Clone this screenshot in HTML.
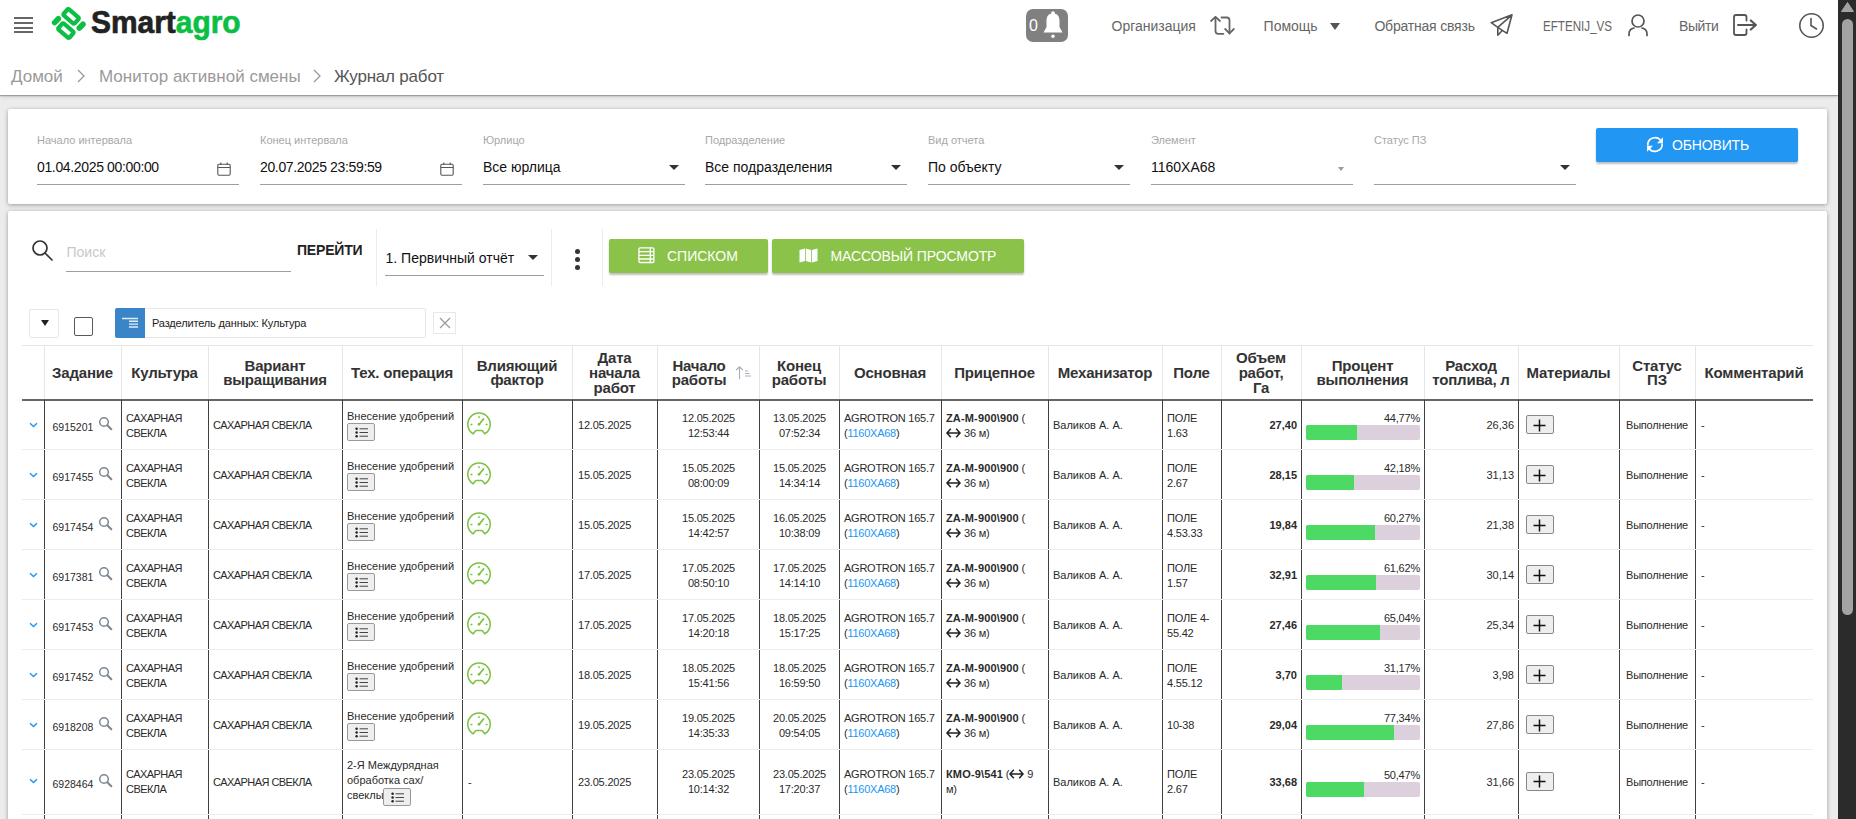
<!DOCTYPE html>
<html><head><meta charset="utf-8">
<style>
html,body{margin:0;padding:0;}
body{width:1856px;height:819px;overflow:hidden;position:relative;background:#ececec;font-family:"Liberation Sans",sans-serif;}
.t{position:absolute;white-space:nowrap;line-height:1;}
.abs{position:absolute;}
svg{position:absolute;overflow:visible;}
</style></head><body>
<div style="position:absolute;left:0px;top:0px;width:1838px;height:95px;background:#fff;box-shadow:0 1px 1px rgba(0,0,0,.25),0 1px 4px rgba(0,0,0,.2);z-index:2"></div>
<div class="abs" style="left:0;top:0;width:1838px;height:95px;z-index:3">
<div style="position:absolute;left:14px;top:17px;width:19px;height:2px;background:#666"></div>
<div style="position:absolute;left:14px;top:22px;width:19px;height:2px;background:#666"></div>
<div style="position:absolute;left:14px;top:27px;width:19px;height:2px;background:#666"></div>
<div style="position:absolute;left:14px;top:31px;width:19px;height:2px;background:#666"></div>
<svg style="left:48px;top:4px" width="42" height="40" viewBox="0 0 42 40">
<g fill="none" stroke="#0abf44" stroke-width="4.2">
<rect x="-7.3" y="-4" width="14.6" height="8" rx="1.5" transform="translate(23.1 12.4) rotate(41)"/>
<rect x="-7.3" y="-4" width="14.6" height="8" rx="1.5" transform="translate(17.9 26.6) rotate(41)"/>
</g>
<g stroke="#0abf44" stroke-width="5.6" stroke-linecap="round">
<line x1="6.6" y1="18.6" x2="10.3" y2="14.8"/>
<line x1="31.3" y1="24.0" x2="35.0" y2="20.2"/>
</g>
</svg>
<div class="t" style="left:91px;top:5.91px;font-size:32px;color:#333;font-weight:700;letter-spacing:0px;transform:scaleX(0.935);transform-origin:left;"><span style="color:#222;-webkit-text-stroke:0.7px #222">Smart</span><span style="color:#0abf44;-webkit-text-stroke:0.7px #0abf44">agro</span></div>
<div style="position:absolute;left:1026px;top:9px;width:42px;height:33px;background:#808080;border-radius:7px"></div>
<div class="t" style="left:1029px;top:17.66px;font-size:16px;color:#fff;font-family:"Liberation Serif",serif;">0</div>
<svg style="left:1042px;top:11px" width="22" height="28" viewBox="0 0 22 28">
<circle cx="11" cy="2.2" r="1.9" fill="#fff"/>
<path d="M11 2.5 C6 2.5 4.5 6 4.5 10 L4.5 16 L1.5 21.5 L20.5 21.5 L17.5 16 L17.5 10 C17.5 6 16 2.5 11 2.5 Z" fill="#fff"/>
<circle cx="11" cy="25.3" r="1.7" fill="#fff"/>
</svg>
<div class="t" style="left:1111.5px;top:19.15px;font-size:14px;color:#666;">Организация</div>
<svg style="left:1210px;top:16px" width="26" height="19" viewBox="0 0 26 19">
<g fill="none" stroke="#666" stroke-width="1.8" stroke-linecap="round" stroke-linejoin="round">
<path d="M1 5 L5.5 0.8 L10 5"/><path d="M5.5 1.2 V15 Q5.5 17.8 8.3 17.8 H13.4"/>
<path d="M11.5 1.5 H16.8 Q19.5 1.5 19.5 4.2 V17.5"/><path d="M15.2 13 L19.5 17.3 L23.8 13"/>
</g></svg>
<div class="t" style="left:1263.6px;top:19.15px;font-size:14px;color:#666;">Помощь</div>
<svg style="left:1330px;top:22.5px" width="10" height="7" viewBox="0 0 10 7"><path d="M0 0 H10 L5 7 Z" fill="#555"/></svg>
<div class="t" style="left:1374.4px;top:19.15px;font-size:14px;color:#666;letter-spacing:-0.2px;">Обратная связь</div>
<svg style="left:1490px;top:14px" width="23" height="23" viewBox="0 0 23 23">
<g fill="none" stroke="#555" stroke-width="1.6" stroke-linejoin="round">
<path d="M22 0.8 L1.2 8.7 L7.8 13.3 L22 0.8 L17 19.3 L7.8 13.3 V21.2 L12 16.8"/>
</g></svg>
<div class="t" style="left:1542.5px;top:19.15px;font-size:14px;color:#666;transform:scaleX(0.83);transform-origin:left;">EFTENIJ_VS</div>
<svg style="left:1628px;top:14px" width="20" height="22" viewBox="0 0 20 22">
<g fill="none" stroke="#555" stroke-width="1.7" stroke-linecap="round">
<circle cx="10" cy="7" r="6"/><path d="M1 21.5 V20 Q1 15 6 14 M19 21.5 V20 Q19 15 14 14"/>
</g></svg>
<div class="t" style="left:1679px;top:19.15px;font-size:14px;color:#666;letter-spacing:-0.4px;">Выйти</div>
<svg style="left:1733px;top:14px" width="25" height="22" viewBox="0 0 25 22">
<g fill="none" stroke="#555" stroke-width="1.8" stroke-linecap="round" stroke-linejoin="round">
<path d="M13.5 6.5 V3 Q13.5 1 11.5 1 H3 Q1 1 1 3 V19 Q1 21 3 21 H11.5 Q13.5 21 13.5 19 V15.5"/><path d="M5 11 H22.5" stroke-width="2"/><path d="M17.8 6.5 L22.8 11 L17.8 15.5" stroke-width="2.2"/>
</g></svg>
<svg style="left:1799px;top:12.5px" width="26" height="26" viewBox="0 0 26 26">
<g fill="none" stroke="#555" stroke-width="1.6" stroke-linecap="round">
<circle cx="12.5" cy="12.5" r="11.7"/><path d="M12 5.5 V12.5 L17.5 16"/>
</g></svg>
<div class="t" style="left:11px;top:68.01px;font-size:17px;color:#9a9a9a;">Домой</div>
<svg style="left:77px;top:69px" width="8" height="14" viewBox="0 0 8 14"><path d="M1 1 L7 7 L1 13" fill="none" stroke="#999" stroke-width="1.3"/></svg>
<div class="t" style="left:99px;top:68.01px;font-size:17px;color:#9a9a9a;">Монитор активной смены</div>
<svg style="left:313px;top:69px" width="8" height="14" viewBox="0 0 8 14"><path d="M1 1 L7 7 L1 13" fill="none" stroke="#999" stroke-width="1.3"/></svg>
<div class="t" style="left:334px;top:68.01px;font-size:17px;color:#555;letter-spacing:-0.2px;">Журнал работ</div>
</div>
<div style="position:absolute;left:1838px;top:0px;width:18px;height:819px;background:#2b2b2b;z-index:5"></div>
<svg style="left:1841px;top:2px;z-index:6" width="13" height="10" viewBox="0 0 13 10"><path d="M6.5 0.5 L12.5 9.5 H0.5 Z" fill="#a3a3a3" stroke="#a3a3a3" stroke-linejoin="round"/></svg>
<div style="position:absolute;left:1842px;top:19px;width:11px;height:596px;background:#a3a3a3;border-radius:5.5px;z-index:6"></div>
<div style="position:absolute;left:8px;top:109px;width:1819px;height:95px;background:#fff;box-shadow:0 1px 4px rgba(0,0,0,.34);border-radius:2px"></div>
<div class="t" style="left:37px;top:134.89px;font-size:11px;color:#a8a8a8;">Начало интервала</div>
<div class="t" style="left:37px;top:160.15px;font-size:14px;color:#111;letter-spacing:-0.35px;">01.04.2025 00:00:00</div>
<div style="position:absolute;left:37px;top:183.5px;width:202px;height:1px;background:#9e9e9e"></div>
<svg style="left:217px;top:162px" width="14" height="14" viewBox="0 0 14 14"><g fill="none" stroke="#555" stroke-width="1.1"><rect x="0.8" y="2.3" width="12.4" height="10.9" rx="1.2"/><path d="M0.8 5.5 H13.2 M3.8 0.5 V3 M10.2 0.5 V3"/></g></svg>
<div class="t" style="left:260px;top:134.89px;font-size:11px;color:#a8a8a8;">Конец интервала</div>
<div class="t" style="left:260px;top:160.15px;font-size:14px;color:#111;letter-spacing:-0.35px;">20.07.2025 23:59:59</div>
<div style="position:absolute;left:260px;top:183.5px;width:202px;height:1px;background:#9e9e9e"></div>
<svg style="left:440px;top:162px" width="14" height="14" viewBox="0 0 14 14"><g fill="none" stroke="#555" stroke-width="1.1"><rect x="0.8" y="2.3" width="12.4" height="10.9" rx="1.2"/><path d="M0.8 5.5 H13.2 M3.8 0.5 V3 M10.2 0.5 V3"/></g></svg>
<div class="t" style="left:483px;top:134.89px;font-size:11px;color:#a8a8a8;">Юрлицо</div>
<div class="t" style="left:483px;top:160.15px;font-size:14px;color:#111;">Все юрлица</div>
<div style="position:absolute;left:483px;top:183.5px;width:202px;height:1px;background:#9e9e9e"></div>
<svg style="left:669px;top:165px" width="10" height="5" viewBox="0 0 10 5"><path d="M0 0 H10 L5 5 Z" fill="#333"/></svg>
<div class="t" style="left:705px;top:134.89px;font-size:11px;color:#a8a8a8;">Подразделение</div>
<div class="t" style="left:705px;top:160.15px;font-size:14px;color:#111;">Все подразделения</div>
<div style="position:absolute;left:705px;top:183.5px;width:202px;height:1px;background:#9e9e9e"></div>
<svg style="left:891px;top:165px" width="10" height="5" viewBox="0 0 10 5"><path d="M0 0 H10 L5 5 Z" fill="#333"/></svg>
<div class="t" style="left:928px;top:134.89px;font-size:11px;color:#a8a8a8;">Вид отчета</div>
<div class="t" style="left:928px;top:160.15px;font-size:14px;color:#111;">По объекту</div>
<div style="position:absolute;left:928px;top:183.5px;width:202px;height:1px;background:#9e9e9e"></div>
<svg style="left:1114px;top:165px" width="10" height="5" viewBox="0 0 10 5"><path d="M0 0 H10 L5 5 Z" fill="#333"/></svg>
<div class="t" style="left:1151px;top:134.89px;font-size:11px;color:#a8a8a8;">Элемент</div>
<div class="t" style="left:1151px;top:160.15px;font-size:14px;color:#111;">1160XA68</div>
<div style="position:absolute;left:1151px;top:183.5px;width:202px;height:1px;background:#9e9e9e"></div>
<svg style="left:1338px;top:166.5px" width="6" height="4" viewBox="0 0 6 4"><path d="M0 0 H6 L3 4 Z" fill="#999"/></svg>
<div class="t" style="left:1374px;top:134.89px;font-size:11px;color:#a8a8a8;">Статус ПЗ</div>
<div style="position:absolute;left:1374px;top:183.5px;width:202px;height:1px;background:#9e9e9e"></div>
<svg style="left:1560px;top:165px" width="10" height="5" viewBox="0 0 10 5"><path d="M0 0 H10 L5 5 Z" fill="#333"/></svg>
<div style="position:absolute;left:1596px;top:128px;width:202px;height:34px;background:#2196f3;border-radius:2px;box-shadow:0 2px 2px rgba(0,0,0,.25)"></div>
<svg style="left:1646px;top:135.5px" width="18" height="17" viewBox="0 0 18 17">
<g fill="none" stroke="#fff" stroke-width="1.7">
<path d="M1.8 9.5 A7.3 7.3 0 0 1 15.2 5"/><path d="M16.2 7.5 A7.3 7.3 0 0 1 2.8 12"/>
</g>
<path d="M17 1.2 V7.2 H11 Z" fill="#fff"/><path d="M1 15.8 V9.8 H7 Z" fill="#fff"/>
</svg>
<div class="t" style="left:1672px;top:138.35px;font-size:14px;color:#fff;letter-spacing:-0.15px;">ОБНОВИТЬ</div>
<div style="position:absolute;left:8px;top:211px;width:1819px;height:700px;background:#fff;box-shadow:0 1px 4px rgba(0,0,0,.34);border-radius:2px"></div>
<svg style="left:32px;top:240px" width="21" height="21" viewBox="0 0 21 21"><g fill="none" stroke="#333" stroke-width="1.7" stroke-linecap="round"><circle cx="8" cy="8" r="7"/><path d="M13 13 L20 20"/></g></svg>
<div class="t" style="left:66.5px;top:244.85px;font-size:14px;color:#c8c8c8;">Поиск</div>
<div style="position:absolute;left:66px;top:271px;width:225px;height:1px;background:#9e9e9e"></div>
<div class="t" style="left:297px;top:243.15px;font-size:14px;color:#222;font-weight:700;letter-spacing:-0.2px;">ПЕРЕЙТИ</div>
<div style="position:absolute;left:376px;top:229px;width:1px;height:57px;background:#ececec"></div>
<div style="position:absolute;left:551px;top:229px;width:1px;height:57px;background:#ececec"></div>
<div style="position:absolute;left:602px;top:229px;width:1px;height:57px;background:#ececec"></div>
<div class="t" style="left:385.5px;top:250.55px;font-size:14px;color:#111;">1. Первичный отчёт</div>
<svg style="left:527.5px;top:255px" width="10" height="5" viewBox="0 0 10 5"><path d="M0 0 H10 L5 5 Z" fill="#333"/></svg>
<div style="position:absolute;left:385px;top:275px;width:159px;height:1px;background:#9e9e9e"></div>
<div style="position:absolute;left:574.5px;top:248.5px;width:5px;height:5px;background:#333;border-radius:50%"></div>
<div style="position:absolute;left:574.5px;top:256.5px;width:5px;height:5px;background:#333;border-radius:50%"></div>
<div style="position:absolute;left:574.5px;top:264.5px;width:5px;height:5px;background:#333;border-radius:50%"></div>
<div style="position:absolute;left:609px;top:239px;width:159px;height:34px;background:#8bc34a;border-radius:2px;box-shadow:0 2px 2px rgba(0,0,0,.25)"></div>
<svg style="left:637.5px;top:247px" width="17" height="17" viewBox="0 0 17 17"><g fill="none" stroke="#fff" stroke-width="1.3"><rect x="0.9" y="0.9" width="15" height="14.6" rx="1.2"/><path d="M1 4.6 H16 M1 8.3 H16 M1 12 H16 M12.3 1 V15.5"/></g></svg>
<div class="t" style="left:667px;top:249.45px;font-size:14px;color:#fff;">СПИСКОМ</div>
<div style="position:absolute;left:772px;top:239px;width:252px;height:34px;background:#8bc34a;border-radius:2px;box-shadow:0 2px 2px rgba(0,0,0,.25)"></div>
<svg style="left:799px;top:247.5px" width="19" height="15" viewBox="0 0 19 15"><path d="M0.5 2 L6 0.5 V13 L0.5 14.5 Z M6.8 0.5 L12.2 2 V14.5 L6.8 13 Z M13 2 L18.5 0.5 V13 L13 14.5 Z" fill="#fff"/></svg>
<div class="t" style="left:830.5px;top:249.45px;font-size:14px;color:#fff;letter-spacing:-0.1px;">МАССОВЫЙ ПРОСМОТР</div>
<div style="position:absolute;left:29px;top:308.5px;width:30px;height:29px;background:#fff;border:1px solid #e6e6e6;box-sizing:border-box;border-radius:2px"></div>
<svg style="left:40.5px;top:320px" width="8" height="6" viewBox="0 0 8 6"><path d="M0 0 H8 L4 6 Z" fill="#222"/></svg>
<div style="position:absolute;left:74px;top:317px;width:19px;height:19px;border:1.6px solid #5a5a5a;box-sizing:border-box;border-radius:2px"></div>
<div style="position:absolute;left:115px;top:308px;width:311px;height:30px;border:1px solid #e8e8e8;box-sizing:border-box;border-radius:2px"></div>
<div style="position:absolute;left:115px;top:308px;width:30px;height:30px;background:#3a85c8;border-radius:2px 0 0 2px"></div>
<svg style="left:121px;top:316px" width="18" height="14" viewBox="0 0 18 14"><g stroke="#e4edf6" stroke-width="1.4"><path d="M1 2.5 H17 M8 5.2 H17 M8 8.1 H17 M8 11 H17"/></g></svg>
<div class="t" style="left:152px;top:318.19px;font-size:11px;color:#222;letter-spacing:-0.15px;">Разделитель данных: Культура</div>
<div style="position:absolute;left:433px;top:312px;width:23px;height:22px;border:1px solid #e8e8e8;box-sizing:border-box"></div>
<svg style="left:438.5px;top:317px" width="12" height="12" viewBox="0 0 12 12"><path d="M1 1 L11 11 M11 1 L1 11" stroke="#999" stroke-width="1.3"/></svg>
<div style="position:absolute;left:22px;top:345px;width:1791px;height:1px;background:#e6e6e6"></div>
<div style="position:absolute;left:44px;top:345px;width:1px;height:54px;background:#e6e6e6"></div>
<div style="position:absolute;left:121px;top:345px;width:1px;height:54px;background:#e6e6e6"></div>
<div style="position:absolute;left:208px;top:345px;width:1px;height:54px;background:#e6e6e6"></div>
<div style="position:absolute;left:342px;top:345px;width:1px;height:54px;background:#e6e6e6"></div>
<div style="position:absolute;left:462px;top:345px;width:1px;height:54px;background:#e6e6e6"></div>
<div style="position:absolute;left:572px;top:345px;width:1px;height:54px;background:#e6e6e6"></div>
<div style="position:absolute;left:657px;top:345px;width:1px;height:54px;background:#e6e6e6"></div>
<div style="position:absolute;left:759px;top:345px;width:1px;height:54px;background:#e6e6e6"></div>
<div style="position:absolute;left:839px;top:345px;width:1px;height:54px;background:#e6e6e6"></div>
<div style="position:absolute;left:941px;top:345px;width:1px;height:54px;background:#e6e6e6"></div>
<div style="position:absolute;left:1048px;top:345px;width:1px;height:54px;background:#e6e6e6"></div>
<div style="position:absolute;left:1162px;top:345px;width:1px;height:54px;background:#e6e6e6"></div>
<div style="position:absolute;left:1221px;top:345px;width:1px;height:54px;background:#e6e6e6"></div>
<div style="position:absolute;left:1301px;top:345px;width:1px;height:54px;background:#e6e6e6"></div>
<div style="position:absolute;left:1424px;top:345px;width:1px;height:54px;background:#e6e6e6"></div>
<div style="position:absolute;left:1518px;top:345px;width:1px;height:54px;background:#e6e6e6"></div>
<div style="position:absolute;left:1619px;top:345px;width:1px;height:54px;background:#e6e6e6"></div>
<div style="position:absolute;left:1695px;top:345px;width:1px;height:54px;background:#e6e6e6"></div>
<div style="position:absolute;left:22px;top:399px;width:1791px;height:1.5px;background:#666"></div>
<div class="abs" style="left:44px;width:77px;top:365.95px;text-align:center;font-size:15px;font-weight:700;line-height:14.7px;color:#333;letter-spacing:-0.2px">Задание</div>
<div class="abs" style="left:121px;width:87px;top:365.95px;text-align:center;font-size:15px;font-weight:700;line-height:14.7px;color:#333;letter-spacing:-0.2px">Культура</div>
<div class="abs" style="left:208px;width:134px;top:358.60px;text-align:center;font-size:15px;font-weight:700;line-height:14.7px;color:#333;letter-spacing:-0.2px">Вариант<br>выращивания</div>
<div class="abs" style="left:342px;width:120px;top:365.95px;text-align:center;font-size:15px;font-weight:700;line-height:14.7px;color:#333;letter-spacing:-0.2px">Тех. операция</div>
<div class="abs" style="left:462px;width:110px;top:358.60px;text-align:center;font-size:15px;font-weight:700;line-height:14.7px;color:#333;letter-spacing:-0.2px">Влияющий<br>фактор</div>
<div class="abs" style="left:572px;width:85px;top:351.25px;text-align:center;font-size:15px;font-weight:700;line-height:14.7px;color:#333;letter-spacing:-0.2px">Дата<br>начала<br>работ</div>
<div class="abs" style="left:657px;width:84px;top:358.60px;text-align:center;font-size:15px;font-weight:700;line-height:14.7px;color:#333;letter-spacing:-0.2px">Начало<br>работы</div>
<div class="abs" style="left:759px;width:80px;top:358.60px;text-align:center;font-size:15px;font-weight:700;line-height:14.7px;color:#333;letter-spacing:-0.2px">Конец<br>работы</div>
<div class="abs" style="left:839px;width:102px;top:365.95px;text-align:center;font-size:15px;font-weight:700;line-height:14.7px;color:#333;letter-spacing:-0.2px">Основная</div>
<div class="abs" style="left:941px;width:107px;top:365.95px;text-align:center;font-size:15px;font-weight:700;line-height:14.7px;color:#333;letter-spacing:-0.2px">Прицепное</div>
<div class="abs" style="left:1048px;width:114px;top:365.95px;text-align:center;font-size:15px;font-weight:700;line-height:14.7px;color:#333;letter-spacing:-0.2px">Механизатор</div>
<div class="abs" style="left:1162px;width:59px;top:365.95px;text-align:center;font-size:15px;font-weight:700;line-height:14.7px;color:#333;letter-spacing:-0.2px">Поле</div>
<div class="abs" style="left:1221px;width:80px;top:351.25px;text-align:center;font-size:15px;font-weight:700;line-height:14.7px;color:#333;letter-spacing:-0.2px">Объем<br>работ,<br>Га</div>
<div class="abs" style="left:1301px;width:123px;top:358.60px;text-align:center;font-size:15px;font-weight:700;line-height:14.7px;color:#333;letter-spacing:-0.2px">Процент<br>выполнения</div>
<div class="abs" style="left:1424px;width:94px;top:358.60px;text-align:center;font-size:15px;font-weight:700;line-height:14.7px;color:#333;letter-spacing:-0.2px">Расход<br>топлива, л</div>
<div class="abs" style="left:1518px;width:101px;top:365.95px;text-align:center;font-size:15px;font-weight:700;line-height:14.7px;color:#333;letter-spacing:-0.2px">Материалы</div>
<div class="abs" style="left:1619px;width:76px;top:358.60px;text-align:center;font-size:15px;font-weight:700;line-height:14.7px;color:#333;letter-spacing:-0.2px">Статус<br>ПЗ</div>
<div class="abs" style="left:1695px;width:118px;top:365.95px;text-align:center;font-size:15px;font-weight:700;line-height:14.7px;color:#333;letter-spacing:-0.2px">Комментарий</div>
<svg style="left:735px;top:366px" width="17" height="14" viewBox="0 0 17 14"><g stroke="#a9adb8" stroke-width="1.1" fill="none"><path d="M4.5 13.3 V0.8 M1.2 4 L4.5 0.8 L7.8 4"/><path d="M10 5 H13 M10 7.5 H14.5 M10 10 H16"/></g></svg>
<div style="position:absolute;left:22px;top:449px;width:1791px;height:1px;background:#ececec"></div>
<div style="position:absolute;left:44px;top:400px;width:1px;height:49px;background:#404040"></div>
<div style="position:absolute;left:121px;top:400px;width:1px;height:49px;background:#404040"></div>
<div style="position:absolute;left:208px;top:400px;width:1px;height:49px;background:#404040"></div>
<div style="position:absolute;left:342px;top:400px;width:1px;height:49px;background:#404040"></div>
<div style="position:absolute;left:462px;top:400px;width:1px;height:49px;background:#404040"></div>
<div style="position:absolute;left:572px;top:400px;width:1px;height:49px;background:#404040"></div>
<div style="position:absolute;left:657px;top:400px;width:1px;height:49px;background:#404040"></div>
<div style="position:absolute;left:759px;top:400px;width:1px;height:49px;background:#404040"></div>
<div style="position:absolute;left:839px;top:400px;width:1px;height:49px;background:#404040"></div>
<div style="position:absolute;left:941px;top:400px;width:1px;height:49px;background:#404040"></div>
<div style="position:absolute;left:1048px;top:400px;width:1px;height:49px;background:#404040"></div>
<div style="position:absolute;left:1162px;top:400px;width:1px;height:49px;background:#404040"></div>
<div style="position:absolute;left:1221px;top:400px;width:1px;height:49px;background:#404040"></div>
<div style="position:absolute;left:1301px;top:400px;width:1px;height:49px;background:#404040"></div>
<div style="position:absolute;left:1424px;top:400px;width:1px;height:49px;background:#404040"></div>
<div style="position:absolute;left:1518px;top:400px;width:1px;height:49px;background:#404040"></div>
<div style="position:absolute;left:1619px;top:400px;width:1px;height:49px;background:#404040"></div>
<div style="position:absolute;left:1695px;top:400px;width:1px;height:49px;background:#404040"></div>
<svg style="left:28.5px;top:421.7px" width="9" height="6" viewBox="0 0 9 6"><path d="M1 1.2 L4.5 4.6 L8 1.2" fill="none" stroke="#2196f3" stroke-width="1.4"/></svg>
<div class="t" style="left:52.5px;top:422.21px;font-size:10.5px;color:#2a2a2a;">6915201</div>
<svg style="left:98px;top:417.0px" width="15" height="15" viewBox="0 0 15 15"><g fill="none" stroke="#7a8793" stroke-width="1.5" stroke-linecap="round"><circle cx="6" cy="5" r="4.3"/><path d="M9.3 8.3 L13.3 12.2" stroke-width="2.1"/></g></svg>
<div class="abs" style="left:126px;width:78px;top:410.70px;text-align:left;font-size:11px;line-height:15px;color:#2a2a2a;letter-spacing:-0.55px;">САХАРНАЯ<br>СВЕКЛА</div>
<div class="abs" style="left:213px;width:125px;top:418.20px;text-align:left;font-size:11px;line-height:15px;color:#2a2a2a;letter-spacing:-0.55px;">САХАРНАЯ СВЕКЛА</div>
<div class="abs" style="left:347px;top:409.00px;font-size:11px;line-height:15px;color:#2a2a2a;white-space:nowrap;">Внесение удобрений</div>
<div class="abs" style="left:347px;top:422.50px;width:26px;height:16px;border:1px solid #999;background:#eee;border-radius:2px"><svg style="left:6.5px;top:3px" width="14" height="11" viewBox="0 0 14 11"><g fill="#222"><circle cx="1.6" cy="1.8" r="1.25"/><circle cx="1.6" cy="5.5" r="1.25"/><circle cx="1.6" cy="9.2" r="1.25"/></g><g fill="#444"><rect x="4.5" y="1.3" width="8.5" height="1"/><rect x="4.5" y="5" width="8.5" height="1"/><rect x="4.5" y="8.7" width="8.5" height="1"/></g></svg></div>
<svg style="left:467px;top:412.5px" width="24" height="22" viewBox="0 0 24 22"><g fill="none" stroke="#7cc142" stroke-width="1.5" stroke-linecap="round"><path d="M6.2 20.8 A11.2 11.2 0 1 1 17.8 20.8 L15.6 18 Q15.2 17.6 14.6 17.6 H9.4 Q8.8 17.6 8.4 18 Z"/><path d="M12 11.5 L16.5 6" stroke-width="1.8"/><path d="M12 3.8 V4.6 M4 11.5 H4.8 M19.2 11.5 H20"/></g><circle cx="12" cy="11.3" r="1.3" fill="#7cc142"/></svg>
<div class="abs" style="left:578px;width:74px;top:418.20px;text-align:left;font-size:11px;line-height:15px;color:#2a2a2a;letter-spacing:-0.2px;">12.05.2025</div>
<div class="abs" style="left:663px;width:91px;top:410.70px;text-align:center;font-size:11px;line-height:15px;color:#2a2a2a;letter-spacing:-0.2px;">12.05.2025<br>12:53:44</div>
<div class="abs" style="left:765px;width:69px;top:410.70px;text-align:center;font-size:11px;line-height:15px;color:#2a2a2a;letter-spacing:-0.2px;">13.05.2025<br>07:52:34</div>
<div class="abs" style="left:844px;width:93px;top:410.70px;text-align:left;font-size:11px;line-height:15px;color:#2a2a2a;letter-spacing:-0.25px;">AGROTRON 165.7<br>(<span style="color:#2196f3">1160XA68</span>)</div>
<div class="abs" style="left:946px;width:98px;top:410.70px;text-align:left;font-size:11px;line-height:15px;color:#2a2a2a;letter-spacing:-0.2px;"><b style="letter-spacing:0.15px">ZA-M-900\900</b> (<br><svg style="position:relative;display:inline-block;vertical-align:middle;top:-1px;margin-right:3px" width="15" height="10" viewBox="0 0 15 10"><g fill="none" stroke="#222" stroke-width="1.5" stroke-linejoin="miter"><path d="M4.8 0.8 L1 5 L4.8 9.2 M10.2 0.8 L14 5 L10.2 9.2 M1 5 H14"/></g></svg>36 м)</div>
<div class="abs" style="left:1053px;width:105px;top:418.20px;text-align:left;font-size:11px;line-height:15px;color:#2a2a2a;">Валиков А. А.</div>
<div class="abs" style="left:1167px;width:50px;top:410.70px;text-align:left;font-size:11px;line-height:15px;color:#2a2a2a;letter-spacing:-0.2px;">ПОЛЕ<br>1.63</div>
<div class="abs" style="left:1226px;width:71px;top:418.20px;text-align:right;font-size:11px;line-height:15px;color:#2a2a2a;"><b>27,40</b></div>
<div class="t" style="left:1340px;width:80px;text-align:right;top:413.09px;font-size:11px;color:#2a2a2a;letter-spacing:-0.2px;">44,77%</div>
<div style="position:absolute;left:1306px;top:425.0px;width:114px;height:15px;background:#dcd0dc;border-radius:2px;overflow:hidden"></div>
<div style="position:absolute;left:1306px;top:425.0px;width:51px;height:15px;background:#4cd964;border-radius:2px 0 0 2px"></div>
<div class="abs" style="left:1429px;width:85px;top:418.20px;text-align:right;font-size:11px;line-height:15px;color:#2a2a2a;">26,36</div>
<div style="position:absolute;left:1526px;top:415.0px;width:28px;height:19px;background:#eee;border:1px solid #888;box-sizing:border-box;border-radius:2px"></div>
<svg style="left:1533px;top:418.5px" width="13" height="13" viewBox="0 0 13 13"><path d="M6.5 0.5 V12.5 M0.5 6.5 H12.5" stroke="#111" stroke-width="1.5"/></svg>
<div class="abs" style="left:1626px;width:63px;top:418.20px;text-align:left;font-size:11px;line-height:15px;color:#2a2a2a;letter-spacing:-0.2px;">Выполнение</div>
<div class="abs" style="left:1701px;width:107px;top:418.20px;text-align:left;font-size:11px;line-height:15px;color:#2a2a2a;">-</div>
<div style="position:absolute;left:22px;top:499px;width:1791px;height:1px;background:#ececec"></div>
<div style="position:absolute;left:44px;top:450px;width:1px;height:49px;background:#404040"></div>
<div style="position:absolute;left:121px;top:450px;width:1px;height:49px;background:#404040"></div>
<div style="position:absolute;left:208px;top:450px;width:1px;height:49px;background:#404040"></div>
<div style="position:absolute;left:342px;top:450px;width:1px;height:49px;background:#404040"></div>
<div style="position:absolute;left:462px;top:450px;width:1px;height:49px;background:#404040"></div>
<div style="position:absolute;left:572px;top:450px;width:1px;height:49px;background:#404040"></div>
<div style="position:absolute;left:657px;top:450px;width:1px;height:49px;background:#404040"></div>
<div style="position:absolute;left:759px;top:450px;width:1px;height:49px;background:#404040"></div>
<div style="position:absolute;left:839px;top:450px;width:1px;height:49px;background:#404040"></div>
<div style="position:absolute;left:941px;top:450px;width:1px;height:49px;background:#404040"></div>
<div style="position:absolute;left:1048px;top:450px;width:1px;height:49px;background:#404040"></div>
<div style="position:absolute;left:1162px;top:450px;width:1px;height:49px;background:#404040"></div>
<div style="position:absolute;left:1221px;top:450px;width:1px;height:49px;background:#404040"></div>
<div style="position:absolute;left:1301px;top:450px;width:1px;height:49px;background:#404040"></div>
<div style="position:absolute;left:1424px;top:450px;width:1px;height:49px;background:#404040"></div>
<div style="position:absolute;left:1518px;top:450px;width:1px;height:49px;background:#404040"></div>
<div style="position:absolute;left:1619px;top:450px;width:1px;height:49px;background:#404040"></div>
<div style="position:absolute;left:1695px;top:450px;width:1px;height:49px;background:#404040"></div>
<svg style="left:28.5px;top:471.7px" width="9" height="6" viewBox="0 0 9 6"><path d="M1 1.2 L4.5 4.6 L8 1.2" fill="none" stroke="#2196f3" stroke-width="1.4"/></svg>
<div class="t" style="left:52.5px;top:472.21px;font-size:10.5px;color:#2a2a2a;">6917455</div>
<svg style="left:98px;top:467.0px" width="15" height="15" viewBox="0 0 15 15"><g fill="none" stroke="#7a8793" stroke-width="1.5" stroke-linecap="round"><circle cx="6" cy="5" r="4.3"/><path d="M9.3 8.3 L13.3 12.2" stroke-width="2.1"/></g></svg>
<div class="abs" style="left:126px;width:78px;top:460.70px;text-align:left;font-size:11px;line-height:15px;color:#2a2a2a;letter-spacing:-0.55px;">САХАРНАЯ<br>СВЕКЛА</div>
<div class="abs" style="left:213px;width:125px;top:468.20px;text-align:left;font-size:11px;line-height:15px;color:#2a2a2a;letter-spacing:-0.55px;">САХАРНАЯ СВЕКЛА</div>
<div class="abs" style="left:347px;top:459.00px;font-size:11px;line-height:15px;color:#2a2a2a;white-space:nowrap;">Внесение удобрений</div>
<div class="abs" style="left:347px;top:472.50px;width:26px;height:16px;border:1px solid #999;background:#eee;border-radius:2px"><svg style="left:6.5px;top:3px" width="14" height="11" viewBox="0 0 14 11"><g fill="#222"><circle cx="1.6" cy="1.8" r="1.25"/><circle cx="1.6" cy="5.5" r="1.25"/><circle cx="1.6" cy="9.2" r="1.25"/></g><g fill="#444"><rect x="4.5" y="1.3" width="8.5" height="1"/><rect x="4.5" y="5" width="8.5" height="1"/><rect x="4.5" y="8.7" width="8.5" height="1"/></g></svg></div>
<svg style="left:467px;top:462.5px" width="24" height="22" viewBox="0 0 24 22"><g fill="none" stroke="#7cc142" stroke-width="1.5" stroke-linecap="round"><path d="M6.2 20.8 A11.2 11.2 0 1 1 17.8 20.8 L15.6 18 Q15.2 17.6 14.6 17.6 H9.4 Q8.8 17.6 8.4 18 Z"/><path d="M12 11.5 L16.5 6" stroke-width="1.8"/><path d="M12 3.8 V4.6 M4 11.5 H4.8 M19.2 11.5 H20"/></g><circle cx="12" cy="11.3" r="1.3" fill="#7cc142"/></svg>
<div class="abs" style="left:578px;width:74px;top:468.20px;text-align:left;font-size:11px;line-height:15px;color:#2a2a2a;letter-spacing:-0.2px;">15.05.2025</div>
<div class="abs" style="left:663px;width:91px;top:460.70px;text-align:center;font-size:11px;line-height:15px;color:#2a2a2a;letter-spacing:-0.2px;">15.05.2025<br>08:00:09</div>
<div class="abs" style="left:765px;width:69px;top:460.70px;text-align:center;font-size:11px;line-height:15px;color:#2a2a2a;letter-spacing:-0.2px;">15.05.2025<br>14:34:14</div>
<div class="abs" style="left:844px;width:93px;top:460.70px;text-align:left;font-size:11px;line-height:15px;color:#2a2a2a;letter-spacing:-0.25px;">AGROTRON 165.7<br>(<span style="color:#2196f3">1160XA68</span>)</div>
<div class="abs" style="left:946px;width:98px;top:460.70px;text-align:left;font-size:11px;line-height:15px;color:#2a2a2a;letter-spacing:-0.2px;"><b style="letter-spacing:0.15px">ZA-M-900\900</b> (<br><svg style="position:relative;display:inline-block;vertical-align:middle;top:-1px;margin-right:3px" width="15" height="10" viewBox="0 0 15 10"><g fill="none" stroke="#222" stroke-width="1.5" stroke-linejoin="miter"><path d="M4.8 0.8 L1 5 L4.8 9.2 M10.2 0.8 L14 5 L10.2 9.2 M1 5 H14"/></g></svg>36 м)</div>
<div class="abs" style="left:1053px;width:105px;top:468.20px;text-align:left;font-size:11px;line-height:15px;color:#2a2a2a;">Валиков А. А.</div>
<div class="abs" style="left:1167px;width:50px;top:460.70px;text-align:left;font-size:11px;line-height:15px;color:#2a2a2a;letter-spacing:-0.2px;">ПОЛЕ<br>2.67</div>
<div class="abs" style="left:1226px;width:71px;top:468.20px;text-align:right;font-size:11px;line-height:15px;color:#2a2a2a;"><b>28,15</b></div>
<div class="t" style="left:1340px;width:80px;text-align:right;top:463.09px;font-size:11px;color:#2a2a2a;letter-spacing:-0.2px;">42,18%</div>
<div style="position:absolute;left:1306px;top:475.0px;width:114px;height:15px;background:#dcd0dc;border-radius:2px;overflow:hidden"></div>
<div style="position:absolute;left:1306px;top:475.0px;width:48px;height:15px;background:#4cd964;border-radius:2px 0 0 2px"></div>
<div class="abs" style="left:1429px;width:85px;top:468.20px;text-align:right;font-size:11px;line-height:15px;color:#2a2a2a;">31,13</div>
<div style="position:absolute;left:1526px;top:465.0px;width:28px;height:19px;background:#eee;border:1px solid #888;box-sizing:border-box;border-radius:2px"></div>
<svg style="left:1533px;top:468.5px" width="13" height="13" viewBox="0 0 13 13"><path d="M6.5 0.5 V12.5 M0.5 6.5 H12.5" stroke="#111" stroke-width="1.5"/></svg>
<div class="abs" style="left:1626px;width:63px;top:468.20px;text-align:left;font-size:11px;line-height:15px;color:#2a2a2a;letter-spacing:-0.2px;">Выполнение</div>
<div class="abs" style="left:1701px;width:107px;top:468.20px;text-align:left;font-size:11px;line-height:15px;color:#2a2a2a;">-</div>
<div style="position:absolute;left:22px;top:549px;width:1791px;height:1px;background:#ececec"></div>
<div style="position:absolute;left:44px;top:500px;width:1px;height:49px;background:#404040"></div>
<div style="position:absolute;left:121px;top:500px;width:1px;height:49px;background:#404040"></div>
<div style="position:absolute;left:208px;top:500px;width:1px;height:49px;background:#404040"></div>
<div style="position:absolute;left:342px;top:500px;width:1px;height:49px;background:#404040"></div>
<div style="position:absolute;left:462px;top:500px;width:1px;height:49px;background:#404040"></div>
<div style="position:absolute;left:572px;top:500px;width:1px;height:49px;background:#404040"></div>
<div style="position:absolute;left:657px;top:500px;width:1px;height:49px;background:#404040"></div>
<div style="position:absolute;left:759px;top:500px;width:1px;height:49px;background:#404040"></div>
<div style="position:absolute;left:839px;top:500px;width:1px;height:49px;background:#404040"></div>
<div style="position:absolute;left:941px;top:500px;width:1px;height:49px;background:#404040"></div>
<div style="position:absolute;left:1048px;top:500px;width:1px;height:49px;background:#404040"></div>
<div style="position:absolute;left:1162px;top:500px;width:1px;height:49px;background:#404040"></div>
<div style="position:absolute;left:1221px;top:500px;width:1px;height:49px;background:#404040"></div>
<div style="position:absolute;left:1301px;top:500px;width:1px;height:49px;background:#404040"></div>
<div style="position:absolute;left:1424px;top:500px;width:1px;height:49px;background:#404040"></div>
<div style="position:absolute;left:1518px;top:500px;width:1px;height:49px;background:#404040"></div>
<div style="position:absolute;left:1619px;top:500px;width:1px;height:49px;background:#404040"></div>
<div style="position:absolute;left:1695px;top:500px;width:1px;height:49px;background:#404040"></div>
<svg style="left:28.5px;top:521.7px" width="9" height="6" viewBox="0 0 9 6"><path d="M1 1.2 L4.5 4.6 L8 1.2" fill="none" stroke="#2196f3" stroke-width="1.4"/></svg>
<div class="t" style="left:52.5px;top:522.21px;font-size:10.5px;color:#2a2a2a;">6917454</div>
<svg style="left:98px;top:517.0px" width="15" height="15" viewBox="0 0 15 15"><g fill="none" stroke="#7a8793" stroke-width="1.5" stroke-linecap="round"><circle cx="6" cy="5" r="4.3"/><path d="M9.3 8.3 L13.3 12.2" stroke-width="2.1"/></g></svg>
<div class="abs" style="left:126px;width:78px;top:510.70px;text-align:left;font-size:11px;line-height:15px;color:#2a2a2a;letter-spacing:-0.55px;">САХАРНАЯ<br>СВЕКЛА</div>
<div class="abs" style="left:213px;width:125px;top:518.20px;text-align:left;font-size:11px;line-height:15px;color:#2a2a2a;letter-spacing:-0.55px;">САХАРНАЯ СВЕКЛА</div>
<div class="abs" style="left:347px;top:509.00px;font-size:11px;line-height:15px;color:#2a2a2a;white-space:nowrap;">Внесение удобрений</div>
<div class="abs" style="left:347px;top:522.50px;width:26px;height:16px;border:1px solid #999;background:#eee;border-radius:2px"><svg style="left:6.5px;top:3px" width="14" height="11" viewBox="0 0 14 11"><g fill="#222"><circle cx="1.6" cy="1.8" r="1.25"/><circle cx="1.6" cy="5.5" r="1.25"/><circle cx="1.6" cy="9.2" r="1.25"/></g><g fill="#444"><rect x="4.5" y="1.3" width="8.5" height="1"/><rect x="4.5" y="5" width="8.5" height="1"/><rect x="4.5" y="8.7" width="8.5" height="1"/></g></svg></div>
<svg style="left:467px;top:512.5px" width="24" height="22" viewBox="0 0 24 22"><g fill="none" stroke="#7cc142" stroke-width="1.5" stroke-linecap="round"><path d="M6.2 20.8 A11.2 11.2 0 1 1 17.8 20.8 L15.6 18 Q15.2 17.6 14.6 17.6 H9.4 Q8.8 17.6 8.4 18 Z"/><path d="M12 11.5 L16.5 6" stroke-width="1.8"/><path d="M12 3.8 V4.6 M4 11.5 H4.8 M19.2 11.5 H20"/></g><circle cx="12" cy="11.3" r="1.3" fill="#7cc142"/></svg>
<div class="abs" style="left:578px;width:74px;top:518.20px;text-align:left;font-size:11px;line-height:15px;color:#2a2a2a;letter-spacing:-0.2px;">15.05.2025</div>
<div class="abs" style="left:663px;width:91px;top:510.70px;text-align:center;font-size:11px;line-height:15px;color:#2a2a2a;letter-spacing:-0.2px;">15.05.2025<br>14:42:57</div>
<div class="abs" style="left:765px;width:69px;top:510.70px;text-align:center;font-size:11px;line-height:15px;color:#2a2a2a;letter-spacing:-0.2px;">16.05.2025<br>10:38:09</div>
<div class="abs" style="left:844px;width:93px;top:510.70px;text-align:left;font-size:11px;line-height:15px;color:#2a2a2a;letter-spacing:-0.25px;">AGROTRON 165.7<br>(<span style="color:#2196f3">1160XA68</span>)</div>
<div class="abs" style="left:946px;width:98px;top:510.70px;text-align:left;font-size:11px;line-height:15px;color:#2a2a2a;letter-spacing:-0.2px;"><b style="letter-spacing:0.15px">ZA-M-900\900</b> (<br><svg style="position:relative;display:inline-block;vertical-align:middle;top:-1px;margin-right:3px" width="15" height="10" viewBox="0 0 15 10"><g fill="none" stroke="#222" stroke-width="1.5" stroke-linejoin="miter"><path d="M4.8 0.8 L1 5 L4.8 9.2 M10.2 0.8 L14 5 L10.2 9.2 M1 5 H14"/></g></svg>36 м)</div>
<div class="abs" style="left:1053px;width:105px;top:518.20px;text-align:left;font-size:11px;line-height:15px;color:#2a2a2a;">Валиков А. А.</div>
<div class="abs" style="left:1167px;width:50px;top:510.70px;text-align:left;font-size:11px;line-height:15px;color:#2a2a2a;letter-spacing:-0.2px;">ПОЛЕ<br>4.53.33</div>
<div class="abs" style="left:1226px;width:71px;top:518.20px;text-align:right;font-size:11px;line-height:15px;color:#2a2a2a;"><b>19,84</b></div>
<div class="t" style="left:1340px;width:80px;text-align:right;top:513.09px;font-size:11px;color:#2a2a2a;letter-spacing:-0.2px;">60,27%</div>
<div style="position:absolute;left:1306px;top:525.0px;width:114px;height:15px;background:#dcd0dc;border-radius:2px;overflow:hidden"></div>
<div style="position:absolute;left:1306px;top:525.0px;width:69px;height:15px;background:#4cd964;border-radius:2px 0 0 2px"></div>
<div class="abs" style="left:1429px;width:85px;top:518.20px;text-align:right;font-size:11px;line-height:15px;color:#2a2a2a;">21,38</div>
<div style="position:absolute;left:1526px;top:515.0px;width:28px;height:19px;background:#eee;border:1px solid #888;box-sizing:border-box;border-radius:2px"></div>
<svg style="left:1533px;top:518.5px" width="13" height="13" viewBox="0 0 13 13"><path d="M6.5 0.5 V12.5 M0.5 6.5 H12.5" stroke="#111" stroke-width="1.5"/></svg>
<div class="abs" style="left:1626px;width:63px;top:518.20px;text-align:left;font-size:11px;line-height:15px;color:#2a2a2a;letter-spacing:-0.2px;">Выполнение</div>
<div class="abs" style="left:1701px;width:107px;top:518.20px;text-align:left;font-size:11px;line-height:15px;color:#2a2a2a;">-</div>
<div style="position:absolute;left:22px;top:599px;width:1791px;height:1px;background:#ececec"></div>
<div style="position:absolute;left:44px;top:550px;width:1px;height:49px;background:#404040"></div>
<div style="position:absolute;left:121px;top:550px;width:1px;height:49px;background:#404040"></div>
<div style="position:absolute;left:208px;top:550px;width:1px;height:49px;background:#404040"></div>
<div style="position:absolute;left:342px;top:550px;width:1px;height:49px;background:#404040"></div>
<div style="position:absolute;left:462px;top:550px;width:1px;height:49px;background:#404040"></div>
<div style="position:absolute;left:572px;top:550px;width:1px;height:49px;background:#404040"></div>
<div style="position:absolute;left:657px;top:550px;width:1px;height:49px;background:#404040"></div>
<div style="position:absolute;left:759px;top:550px;width:1px;height:49px;background:#404040"></div>
<div style="position:absolute;left:839px;top:550px;width:1px;height:49px;background:#404040"></div>
<div style="position:absolute;left:941px;top:550px;width:1px;height:49px;background:#404040"></div>
<div style="position:absolute;left:1048px;top:550px;width:1px;height:49px;background:#404040"></div>
<div style="position:absolute;left:1162px;top:550px;width:1px;height:49px;background:#404040"></div>
<div style="position:absolute;left:1221px;top:550px;width:1px;height:49px;background:#404040"></div>
<div style="position:absolute;left:1301px;top:550px;width:1px;height:49px;background:#404040"></div>
<div style="position:absolute;left:1424px;top:550px;width:1px;height:49px;background:#404040"></div>
<div style="position:absolute;left:1518px;top:550px;width:1px;height:49px;background:#404040"></div>
<div style="position:absolute;left:1619px;top:550px;width:1px;height:49px;background:#404040"></div>
<div style="position:absolute;left:1695px;top:550px;width:1px;height:49px;background:#404040"></div>
<svg style="left:28.5px;top:571.7px" width="9" height="6" viewBox="0 0 9 6"><path d="M1 1.2 L4.5 4.6 L8 1.2" fill="none" stroke="#2196f3" stroke-width="1.4"/></svg>
<div class="t" style="left:52.5px;top:572.21px;font-size:10.5px;color:#2a2a2a;">6917381</div>
<svg style="left:98px;top:567.0px" width="15" height="15" viewBox="0 0 15 15"><g fill="none" stroke="#7a8793" stroke-width="1.5" stroke-linecap="round"><circle cx="6" cy="5" r="4.3"/><path d="M9.3 8.3 L13.3 12.2" stroke-width="2.1"/></g></svg>
<div class="abs" style="left:126px;width:78px;top:560.70px;text-align:left;font-size:11px;line-height:15px;color:#2a2a2a;letter-spacing:-0.55px;">САХАРНАЯ<br>СВЕКЛА</div>
<div class="abs" style="left:213px;width:125px;top:568.20px;text-align:left;font-size:11px;line-height:15px;color:#2a2a2a;letter-spacing:-0.55px;">САХАРНАЯ СВЕКЛА</div>
<div class="abs" style="left:347px;top:559.00px;font-size:11px;line-height:15px;color:#2a2a2a;white-space:nowrap;">Внесение удобрений</div>
<div class="abs" style="left:347px;top:572.50px;width:26px;height:16px;border:1px solid #999;background:#eee;border-radius:2px"><svg style="left:6.5px;top:3px" width="14" height="11" viewBox="0 0 14 11"><g fill="#222"><circle cx="1.6" cy="1.8" r="1.25"/><circle cx="1.6" cy="5.5" r="1.25"/><circle cx="1.6" cy="9.2" r="1.25"/></g><g fill="#444"><rect x="4.5" y="1.3" width="8.5" height="1"/><rect x="4.5" y="5" width="8.5" height="1"/><rect x="4.5" y="8.7" width="8.5" height="1"/></g></svg></div>
<svg style="left:467px;top:562.5px" width="24" height="22" viewBox="0 0 24 22"><g fill="none" stroke="#7cc142" stroke-width="1.5" stroke-linecap="round"><path d="M6.2 20.8 A11.2 11.2 0 1 1 17.8 20.8 L15.6 18 Q15.2 17.6 14.6 17.6 H9.4 Q8.8 17.6 8.4 18 Z"/><path d="M12 11.5 L16.5 6" stroke-width="1.8"/><path d="M12 3.8 V4.6 M4 11.5 H4.8 M19.2 11.5 H20"/></g><circle cx="12" cy="11.3" r="1.3" fill="#7cc142"/></svg>
<div class="abs" style="left:578px;width:74px;top:568.20px;text-align:left;font-size:11px;line-height:15px;color:#2a2a2a;letter-spacing:-0.2px;">17.05.2025</div>
<div class="abs" style="left:663px;width:91px;top:560.70px;text-align:center;font-size:11px;line-height:15px;color:#2a2a2a;letter-spacing:-0.2px;">17.05.2025<br>08:50:10</div>
<div class="abs" style="left:765px;width:69px;top:560.70px;text-align:center;font-size:11px;line-height:15px;color:#2a2a2a;letter-spacing:-0.2px;">17.05.2025<br>14:14:10</div>
<div class="abs" style="left:844px;width:93px;top:560.70px;text-align:left;font-size:11px;line-height:15px;color:#2a2a2a;letter-spacing:-0.25px;">AGROTRON 165.7<br>(<span style="color:#2196f3">1160XA68</span>)</div>
<div class="abs" style="left:946px;width:98px;top:560.70px;text-align:left;font-size:11px;line-height:15px;color:#2a2a2a;letter-spacing:-0.2px;"><b style="letter-spacing:0.15px">ZA-M-900\900</b> (<br><svg style="position:relative;display:inline-block;vertical-align:middle;top:-1px;margin-right:3px" width="15" height="10" viewBox="0 0 15 10"><g fill="none" stroke="#222" stroke-width="1.5" stroke-linejoin="miter"><path d="M4.8 0.8 L1 5 L4.8 9.2 M10.2 0.8 L14 5 L10.2 9.2 M1 5 H14"/></g></svg>36 м)</div>
<div class="abs" style="left:1053px;width:105px;top:568.20px;text-align:left;font-size:11px;line-height:15px;color:#2a2a2a;">Валиков А. А.</div>
<div class="abs" style="left:1167px;width:50px;top:560.70px;text-align:left;font-size:11px;line-height:15px;color:#2a2a2a;letter-spacing:-0.2px;">ПОЛЕ<br>1.57</div>
<div class="abs" style="left:1226px;width:71px;top:568.20px;text-align:right;font-size:11px;line-height:15px;color:#2a2a2a;"><b>32,91</b></div>
<div class="t" style="left:1340px;width:80px;text-align:right;top:563.09px;font-size:11px;color:#2a2a2a;letter-spacing:-0.2px;">61,62%</div>
<div style="position:absolute;left:1306px;top:575.0px;width:114px;height:15px;background:#dcd0dc;border-radius:2px;overflow:hidden"></div>
<div style="position:absolute;left:1306px;top:575.0px;width:70px;height:15px;background:#4cd964;border-radius:2px 0 0 2px"></div>
<div class="abs" style="left:1429px;width:85px;top:568.20px;text-align:right;font-size:11px;line-height:15px;color:#2a2a2a;">30,14</div>
<div style="position:absolute;left:1526px;top:565.0px;width:28px;height:19px;background:#eee;border:1px solid #888;box-sizing:border-box;border-radius:2px"></div>
<svg style="left:1533px;top:568.5px" width="13" height="13" viewBox="0 0 13 13"><path d="M6.5 0.5 V12.5 M0.5 6.5 H12.5" stroke="#111" stroke-width="1.5"/></svg>
<div class="abs" style="left:1626px;width:63px;top:568.20px;text-align:left;font-size:11px;line-height:15px;color:#2a2a2a;letter-spacing:-0.2px;">Выполнение</div>
<div class="abs" style="left:1701px;width:107px;top:568.20px;text-align:left;font-size:11px;line-height:15px;color:#2a2a2a;">-</div>
<div style="position:absolute;left:22px;top:649px;width:1791px;height:1px;background:#ececec"></div>
<div style="position:absolute;left:44px;top:600px;width:1px;height:49px;background:#404040"></div>
<div style="position:absolute;left:121px;top:600px;width:1px;height:49px;background:#404040"></div>
<div style="position:absolute;left:208px;top:600px;width:1px;height:49px;background:#404040"></div>
<div style="position:absolute;left:342px;top:600px;width:1px;height:49px;background:#404040"></div>
<div style="position:absolute;left:462px;top:600px;width:1px;height:49px;background:#404040"></div>
<div style="position:absolute;left:572px;top:600px;width:1px;height:49px;background:#404040"></div>
<div style="position:absolute;left:657px;top:600px;width:1px;height:49px;background:#404040"></div>
<div style="position:absolute;left:759px;top:600px;width:1px;height:49px;background:#404040"></div>
<div style="position:absolute;left:839px;top:600px;width:1px;height:49px;background:#404040"></div>
<div style="position:absolute;left:941px;top:600px;width:1px;height:49px;background:#404040"></div>
<div style="position:absolute;left:1048px;top:600px;width:1px;height:49px;background:#404040"></div>
<div style="position:absolute;left:1162px;top:600px;width:1px;height:49px;background:#404040"></div>
<div style="position:absolute;left:1221px;top:600px;width:1px;height:49px;background:#404040"></div>
<div style="position:absolute;left:1301px;top:600px;width:1px;height:49px;background:#404040"></div>
<div style="position:absolute;left:1424px;top:600px;width:1px;height:49px;background:#404040"></div>
<div style="position:absolute;left:1518px;top:600px;width:1px;height:49px;background:#404040"></div>
<div style="position:absolute;left:1619px;top:600px;width:1px;height:49px;background:#404040"></div>
<div style="position:absolute;left:1695px;top:600px;width:1px;height:49px;background:#404040"></div>
<svg style="left:28.5px;top:621.7px" width="9" height="6" viewBox="0 0 9 6"><path d="M1 1.2 L4.5 4.6 L8 1.2" fill="none" stroke="#2196f3" stroke-width="1.4"/></svg>
<div class="t" style="left:52.5px;top:622.21px;font-size:10.5px;color:#2a2a2a;">6917453</div>
<svg style="left:98px;top:617.0px" width="15" height="15" viewBox="0 0 15 15"><g fill="none" stroke="#7a8793" stroke-width="1.5" stroke-linecap="round"><circle cx="6" cy="5" r="4.3"/><path d="M9.3 8.3 L13.3 12.2" stroke-width="2.1"/></g></svg>
<div class="abs" style="left:126px;width:78px;top:610.70px;text-align:left;font-size:11px;line-height:15px;color:#2a2a2a;letter-spacing:-0.55px;">САХАРНАЯ<br>СВЕКЛА</div>
<div class="abs" style="left:213px;width:125px;top:618.20px;text-align:left;font-size:11px;line-height:15px;color:#2a2a2a;letter-spacing:-0.55px;">САХАРНАЯ СВЕКЛА</div>
<div class="abs" style="left:347px;top:609.00px;font-size:11px;line-height:15px;color:#2a2a2a;white-space:nowrap;">Внесение удобрений</div>
<div class="abs" style="left:347px;top:622.50px;width:26px;height:16px;border:1px solid #999;background:#eee;border-radius:2px"><svg style="left:6.5px;top:3px" width="14" height="11" viewBox="0 0 14 11"><g fill="#222"><circle cx="1.6" cy="1.8" r="1.25"/><circle cx="1.6" cy="5.5" r="1.25"/><circle cx="1.6" cy="9.2" r="1.25"/></g><g fill="#444"><rect x="4.5" y="1.3" width="8.5" height="1"/><rect x="4.5" y="5" width="8.5" height="1"/><rect x="4.5" y="8.7" width="8.5" height="1"/></g></svg></div>
<svg style="left:467px;top:612.5px" width="24" height="22" viewBox="0 0 24 22"><g fill="none" stroke="#7cc142" stroke-width="1.5" stroke-linecap="round"><path d="M6.2 20.8 A11.2 11.2 0 1 1 17.8 20.8 L15.6 18 Q15.2 17.6 14.6 17.6 H9.4 Q8.8 17.6 8.4 18 Z"/><path d="M12 11.5 L16.5 6" stroke-width="1.8"/><path d="M12 3.8 V4.6 M4 11.5 H4.8 M19.2 11.5 H20"/></g><circle cx="12" cy="11.3" r="1.3" fill="#7cc142"/></svg>
<div class="abs" style="left:578px;width:74px;top:618.20px;text-align:left;font-size:11px;line-height:15px;color:#2a2a2a;letter-spacing:-0.2px;">17.05.2025</div>
<div class="abs" style="left:663px;width:91px;top:610.70px;text-align:center;font-size:11px;line-height:15px;color:#2a2a2a;letter-spacing:-0.2px;">17.05.2025<br>14:20:18</div>
<div class="abs" style="left:765px;width:69px;top:610.70px;text-align:center;font-size:11px;line-height:15px;color:#2a2a2a;letter-spacing:-0.2px;">18.05.2025<br>15:17:25</div>
<div class="abs" style="left:844px;width:93px;top:610.70px;text-align:left;font-size:11px;line-height:15px;color:#2a2a2a;letter-spacing:-0.25px;">AGROTRON 165.7<br>(<span style="color:#2196f3">1160XA68</span>)</div>
<div class="abs" style="left:946px;width:98px;top:610.70px;text-align:left;font-size:11px;line-height:15px;color:#2a2a2a;letter-spacing:-0.2px;"><b style="letter-spacing:0.15px">ZA-M-900\900</b> (<br><svg style="position:relative;display:inline-block;vertical-align:middle;top:-1px;margin-right:3px" width="15" height="10" viewBox="0 0 15 10"><g fill="none" stroke="#222" stroke-width="1.5" stroke-linejoin="miter"><path d="M4.8 0.8 L1 5 L4.8 9.2 M10.2 0.8 L14 5 L10.2 9.2 M1 5 H14"/></g></svg>36 м)</div>
<div class="abs" style="left:1053px;width:105px;top:618.20px;text-align:left;font-size:11px;line-height:15px;color:#2a2a2a;">Валиков А. А.</div>
<div class="abs" style="left:1167px;width:50px;top:610.70px;text-align:left;font-size:11px;line-height:15px;color:#2a2a2a;letter-spacing:-0.2px;">ПОЛЕ 4-<br>55.42</div>
<div class="abs" style="left:1226px;width:71px;top:618.20px;text-align:right;font-size:11px;line-height:15px;color:#2a2a2a;"><b>27,46</b></div>
<div class="t" style="left:1340px;width:80px;text-align:right;top:613.09px;font-size:11px;color:#2a2a2a;letter-spacing:-0.2px;">65,04%</div>
<div style="position:absolute;left:1306px;top:625.0px;width:114px;height:15px;background:#dcd0dc;border-radius:2px;overflow:hidden"></div>
<div style="position:absolute;left:1306px;top:625.0px;width:74px;height:15px;background:#4cd964;border-radius:2px 0 0 2px"></div>
<div class="abs" style="left:1429px;width:85px;top:618.20px;text-align:right;font-size:11px;line-height:15px;color:#2a2a2a;">25,34</div>
<div style="position:absolute;left:1526px;top:615.0px;width:28px;height:19px;background:#eee;border:1px solid #888;box-sizing:border-box;border-radius:2px"></div>
<svg style="left:1533px;top:618.5px" width="13" height="13" viewBox="0 0 13 13"><path d="M6.5 0.5 V12.5 M0.5 6.5 H12.5" stroke="#111" stroke-width="1.5"/></svg>
<div class="abs" style="left:1626px;width:63px;top:618.20px;text-align:left;font-size:11px;line-height:15px;color:#2a2a2a;letter-spacing:-0.2px;">Выполнение</div>
<div class="abs" style="left:1701px;width:107px;top:618.20px;text-align:left;font-size:11px;line-height:15px;color:#2a2a2a;">-</div>
<div style="position:absolute;left:22px;top:699px;width:1791px;height:1px;background:#ececec"></div>
<div style="position:absolute;left:44px;top:650px;width:1px;height:49px;background:#404040"></div>
<div style="position:absolute;left:121px;top:650px;width:1px;height:49px;background:#404040"></div>
<div style="position:absolute;left:208px;top:650px;width:1px;height:49px;background:#404040"></div>
<div style="position:absolute;left:342px;top:650px;width:1px;height:49px;background:#404040"></div>
<div style="position:absolute;left:462px;top:650px;width:1px;height:49px;background:#404040"></div>
<div style="position:absolute;left:572px;top:650px;width:1px;height:49px;background:#404040"></div>
<div style="position:absolute;left:657px;top:650px;width:1px;height:49px;background:#404040"></div>
<div style="position:absolute;left:759px;top:650px;width:1px;height:49px;background:#404040"></div>
<div style="position:absolute;left:839px;top:650px;width:1px;height:49px;background:#404040"></div>
<div style="position:absolute;left:941px;top:650px;width:1px;height:49px;background:#404040"></div>
<div style="position:absolute;left:1048px;top:650px;width:1px;height:49px;background:#404040"></div>
<div style="position:absolute;left:1162px;top:650px;width:1px;height:49px;background:#404040"></div>
<div style="position:absolute;left:1221px;top:650px;width:1px;height:49px;background:#404040"></div>
<div style="position:absolute;left:1301px;top:650px;width:1px;height:49px;background:#404040"></div>
<div style="position:absolute;left:1424px;top:650px;width:1px;height:49px;background:#404040"></div>
<div style="position:absolute;left:1518px;top:650px;width:1px;height:49px;background:#404040"></div>
<div style="position:absolute;left:1619px;top:650px;width:1px;height:49px;background:#404040"></div>
<div style="position:absolute;left:1695px;top:650px;width:1px;height:49px;background:#404040"></div>
<svg style="left:28.5px;top:671.7px" width="9" height="6" viewBox="0 0 9 6"><path d="M1 1.2 L4.5 4.6 L8 1.2" fill="none" stroke="#2196f3" stroke-width="1.4"/></svg>
<div class="t" style="left:52.5px;top:672.21px;font-size:10.5px;color:#2a2a2a;">6917452</div>
<svg style="left:98px;top:667.0px" width="15" height="15" viewBox="0 0 15 15"><g fill="none" stroke="#7a8793" stroke-width="1.5" stroke-linecap="round"><circle cx="6" cy="5" r="4.3"/><path d="M9.3 8.3 L13.3 12.2" stroke-width="2.1"/></g></svg>
<div class="abs" style="left:126px;width:78px;top:660.70px;text-align:left;font-size:11px;line-height:15px;color:#2a2a2a;letter-spacing:-0.55px;">САХАРНАЯ<br>СВЕКЛА</div>
<div class="abs" style="left:213px;width:125px;top:668.20px;text-align:left;font-size:11px;line-height:15px;color:#2a2a2a;letter-spacing:-0.55px;">САХАРНАЯ СВЕКЛА</div>
<div class="abs" style="left:347px;top:659.00px;font-size:11px;line-height:15px;color:#2a2a2a;white-space:nowrap;">Внесение удобрений</div>
<div class="abs" style="left:347px;top:672.50px;width:26px;height:16px;border:1px solid #999;background:#eee;border-radius:2px"><svg style="left:6.5px;top:3px" width="14" height="11" viewBox="0 0 14 11"><g fill="#222"><circle cx="1.6" cy="1.8" r="1.25"/><circle cx="1.6" cy="5.5" r="1.25"/><circle cx="1.6" cy="9.2" r="1.25"/></g><g fill="#444"><rect x="4.5" y="1.3" width="8.5" height="1"/><rect x="4.5" y="5" width="8.5" height="1"/><rect x="4.5" y="8.7" width="8.5" height="1"/></g></svg></div>
<svg style="left:467px;top:662.5px" width="24" height="22" viewBox="0 0 24 22"><g fill="none" stroke="#7cc142" stroke-width="1.5" stroke-linecap="round"><path d="M6.2 20.8 A11.2 11.2 0 1 1 17.8 20.8 L15.6 18 Q15.2 17.6 14.6 17.6 H9.4 Q8.8 17.6 8.4 18 Z"/><path d="M12 11.5 L16.5 6" stroke-width="1.8"/><path d="M12 3.8 V4.6 M4 11.5 H4.8 M19.2 11.5 H20"/></g><circle cx="12" cy="11.3" r="1.3" fill="#7cc142"/></svg>
<div class="abs" style="left:578px;width:74px;top:668.20px;text-align:left;font-size:11px;line-height:15px;color:#2a2a2a;letter-spacing:-0.2px;">18.05.2025</div>
<div class="abs" style="left:663px;width:91px;top:660.70px;text-align:center;font-size:11px;line-height:15px;color:#2a2a2a;letter-spacing:-0.2px;">18.05.2025<br>15:41:56</div>
<div class="abs" style="left:765px;width:69px;top:660.70px;text-align:center;font-size:11px;line-height:15px;color:#2a2a2a;letter-spacing:-0.2px;">18.05.2025<br>16:59:50</div>
<div class="abs" style="left:844px;width:93px;top:660.70px;text-align:left;font-size:11px;line-height:15px;color:#2a2a2a;letter-spacing:-0.25px;">AGROTRON 165.7<br>(<span style="color:#2196f3">1160XA68</span>)</div>
<div class="abs" style="left:946px;width:98px;top:660.70px;text-align:left;font-size:11px;line-height:15px;color:#2a2a2a;letter-spacing:-0.2px;"><b style="letter-spacing:0.15px">ZA-M-900\900</b> (<br><svg style="position:relative;display:inline-block;vertical-align:middle;top:-1px;margin-right:3px" width="15" height="10" viewBox="0 0 15 10"><g fill="none" stroke="#222" stroke-width="1.5" stroke-linejoin="miter"><path d="M4.8 0.8 L1 5 L4.8 9.2 M10.2 0.8 L14 5 L10.2 9.2 M1 5 H14"/></g></svg>36 м)</div>
<div class="abs" style="left:1053px;width:105px;top:668.20px;text-align:left;font-size:11px;line-height:15px;color:#2a2a2a;">Валиков А. А.</div>
<div class="abs" style="left:1167px;width:50px;top:660.70px;text-align:left;font-size:11px;line-height:15px;color:#2a2a2a;letter-spacing:-0.2px;">ПОЛЕ<br>4.55.12</div>
<div class="abs" style="left:1226px;width:71px;top:668.20px;text-align:right;font-size:11px;line-height:15px;color:#2a2a2a;"><b>3,70</b></div>
<div class="t" style="left:1340px;width:80px;text-align:right;top:663.09px;font-size:11px;color:#2a2a2a;letter-spacing:-0.2px;">31,17%</div>
<div style="position:absolute;left:1306px;top:675.0px;width:114px;height:15px;background:#dcd0dc;border-radius:2px;overflow:hidden"></div>
<div style="position:absolute;left:1306px;top:675.0px;width:36px;height:15px;background:#4cd964;border-radius:2px 0 0 2px"></div>
<div class="abs" style="left:1429px;width:85px;top:668.20px;text-align:right;font-size:11px;line-height:15px;color:#2a2a2a;">3,98</div>
<div style="position:absolute;left:1526px;top:665.0px;width:28px;height:19px;background:#eee;border:1px solid #888;box-sizing:border-box;border-radius:2px"></div>
<svg style="left:1533px;top:668.5px" width="13" height="13" viewBox="0 0 13 13"><path d="M6.5 0.5 V12.5 M0.5 6.5 H12.5" stroke="#111" stroke-width="1.5"/></svg>
<div class="abs" style="left:1626px;width:63px;top:668.20px;text-align:left;font-size:11px;line-height:15px;color:#2a2a2a;letter-spacing:-0.2px;">Выполнение</div>
<div class="abs" style="left:1701px;width:107px;top:668.20px;text-align:left;font-size:11px;line-height:15px;color:#2a2a2a;">-</div>
<div style="position:absolute;left:22px;top:749px;width:1791px;height:1px;background:#ececec"></div>
<div style="position:absolute;left:44px;top:700px;width:1px;height:49px;background:#404040"></div>
<div style="position:absolute;left:121px;top:700px;width:1px;height:49px;background:#404040"></div>
<div style="position:absolute;left:208px;top:700px;width:1px;height:49px;background:#404040"></div>
<div style="position:absolute;left:342px;top:700px;width:1px;height:49px;background:#404040"></div>
<div style="position:absolute;left:462px;top:700px;width:1px;height:49px;background:#404040"></div>
<div style="position:absolute;left:572px;top:700px;width:1px;height:49px;background:#404040"></div>
<div style="position:absolute;left:657px;top:700px;width:1px;height:49px;background:#404040"></div>
<div style="position:absolute;left:759px;top:700px;width:1px;height:49px;background:#404040"></div>
<div style="position:absolute;left:839px;top:700px;width:1px;height:49px;background:#404040"></div>
<div style="position:absolute;left:941px;top:700px;width:1px;height:49px;background:#404040"></div>
<div style="position:absolute;left:1048px;top:700px;width:1px;height:49px;background:#404040"></div>
<div style="position:absolute;left:1162px;top:700px;width:1px;height:49px;background:#404040"></div>
<div style="position:absolute;left:1221px;top:700px;width:1px;height:49px;background:#404040"></div>
<div style="position:absolute;left:1301px;top:700px;width:1px;height:49px;background:#404040"></div>
<div style="position:absolute;left:1424px;top:700px;width:1px;height:49px;background:#404040"></div>
<div style="position:absolute;left:1518px;top:700px;width:1px;height:49px;background:#404040"></div>
<div style="position:absolute;left:1619px;top:700px;width:1px;height:49px;background:#404040"></div>
<div style="position:absolute;left:1695px;top:700px;width:1px;height:49px;background:#404040"></div>
<svg style="left:28.5px;top:721.7px" width="9" height="6" viewBox="0 0 9 6"><path d="M1 1.2 L4.5 4.6 L8 1.2" fill="none" stroke="#2196f3" stroke-width="1.4"/></svg>
<div class="t" style="left:52.5px;top:722.21px;font-size:10.5px;color:#2a2a2a;">6918208</div>
<svg style="left:98px;top:717.0px" width="15" height="15" viewBox="0 0 15 15"><g fill="none" stroke="#7a8793" stroke-width="1.5" stroke-linecap="round"><circle cx="6" cy="5" r="4.3"/><path d="M9.3 8.3 L13.3 12.2" stroke-width="2.1"/></g></svg>
<div class="abs" style="left:126px;width:78px;top:710.70px;text-align:left;font-size:11px;line-height:15px;color:#2a2a2a;letter-spacing:-0.55px;">САХАРНАЯ<br>СВЕКЛА</div>
<div class="abs" style="left:213px;width:125px;top:718.20px;text-align:left;font-size:11px;line-height:15px;color:#2a2a2a;letter-spacing:-0.55px;">САХАРНАЯ СВЕКЛА</div>
<div class="abs" style="left:347px;top:709.00px;font-size:11px;line-height:15px;color:#2a2a2a;white-space:nowrap;">Внесение удобрений</div>
<div class="abs" style="left:347px;top:722.50px;width:26px;height:16px;border:1px solid #999;background:#eee;border-radius:2px"><svg style="left:6.5px;top:3px" width="14" height="11" viewBox="0 0 14 11"><g fill="#222"><circle cx="1.6" cy="1.8" r="1.25"/><circle cx="1.6" cy="5.5" r="1.25"/><circle cx="1.6" cy="9.2" r="1.25"/></g><g fill="#444"><rect x="4.5" y="1.3" width="8.5" height="1"/><rect x="4.5" y="5" width="8.5" height="1"/><rect x="4.5" y="8.7" width="8.5" height="1"/></g></svg></div>
<svg style="left:467px;top:712.5px" width="24" height="22" viewBox="0 0 24 22"><g fill="none" stroke="#7cc142" stroke-width="1.5" stroke-linecap="round"><path d="M6.2 20.8 A11.2 11.2 0 1 1 17.8 20.8 L15.6 18 Q15.2 17.6 14.6 17.6 H9.4 Q8.8 17.6 8.4 18 Z"/><path d="M12 11.5 L16.5 6" stroke-width="1.8"/><path d="M12 3.8 V4.6 M4 11.5 H4.8 M19.2 11.5 H20"/></g><circle cx="12" cy="11.3" r="1.3" fill="#7cc142"/></svg>
<div class="abs" style="left:578px;width:74px;top:718.20px;text-align:left;font-size:11px;line-height:15px;color:#2a2a2a;letter-spacing:-0.2px;">19.05.2025</div>
<div class="abs" style="left:663px;width:91px;top:710.70px;text-align:center;font-size:11px;line-height:15px;color:#2a2a2a;letter-spacing:-0.2px;">19.05.2025<br>14:35:33</div>
<div class="abs" style="left:765px;width:69px;top:710.70px;text-align:center;font-size:11px;line-height:15px;color:#2a2a2a;letter-spacing:-0.2px;">20.05.2025<br>09:54:05</div>
<div class="abs" style="left:844px;width:93px;top:710.70px;text-align:left;font-size:11px;line-height:15px;color:#2a2a2a;letter-spacing:-0.25px;">AGROTRON 165.7<br>(<span style="color:#2196f3">1160XA68</span>)</div>
<div class="abs" style="left:946px;width:98px;top:710.70px;text-align:left;font-size:11px;line-height:15px;color:#2a2a2a;letter-spacing:-0.2px;"><b style="letter-spacing:0.15px">ZA-M-900\900</b> (<br><svg style="position:relative;display:inline-block;vertical-align:middle;top:-1px;margin-right:3px" width="15" height="10" viewBox="0 0 15 10"><g fill="none" stroke="#222" stroke-width="1.5" stroke-linejoin="miter"><path d="M4.8 0.8 L1 5 L4.8 9.2 M10.2 0.8 L14 5 L10.2 9.2 M1 5 H14"/></g></svg>36 м)</div>
<div class="abs" style="left:1053px;width:105px;top:718.20px;text-align:left;font-size:11px;line-height:15px;color:#2a2a2a;">Валиков А. А.</div>
<div class="abs" style="left:1167px;width:50px;top:718.20px;text-align:left;font-size:11px;line-height:15px;color:#2a2a2a;letter-spacing:-0.2px;">10-38</div>
<div class="abs" style="left:1226px;width:71px;top:718.20px;text-align:right;font-size:11px;line-height:15px;color:#2a2a2a;"><b>29,04</b></div>
<div class="t" style="left:1340px;width:80px;text-align:right;top:713.09px;font-size:11px;color:#2a2a2a;letter-spacing:-0.2px;">77,34%</div>
<div style="position:absolute;left:1306px;top:725.0px;width:114px;height:15px;background:#dcd0dc;border-radius:2px;overflow:hidden"></div>
<div style="position:absolute;left:1306px;top:725.0px;width:88px;height:15px;background:#4cd964;border-radius:2px 0 0 2px"></div>
<div class="abs" style="left:1429px;width:85px;top:718.20px;text-align:right;font-size:11px;line-height:15px;color:#2a2a2a;">27,86</div>
<div style="position:absolute;left:1526px;top:715.0px;width:28px;height:19px;background:#eee;border:1px solid #888;box-sizing:border-box;border-radius:2px"></div>
<svg style="left:1533px;top:718.5px" width="13" height="13" viewBox="0 0 13 13"><path d="M6.5 0.5 V12.5 M0.5 6.5 H12.5" stroke="#111" stroke-width="1.5"/></svg>
<div class="abs" style="left:1626px;width:63px;top:718.20px;text-align:left;font-size:11px;line-height:15px;color:#2a2a2a;letter-spacing:-0.2px;">Выполнение</div>
<div class="abs" style="left:1701px;width:107px;top:718.20px;text-align:left;font-size:11px;line-height:15px;color:#2a2a2a;">-</div>
<div style="position:absolute;left:22px;top:814px;width:1791px;height:1px;background:#ececec"></div>
<div style="position:absolute;left:44px;top:750px;width:1px;height:64px;background:#404040"></div>
<div style="position:absolute;left:121px;top:750px;width:1px;height:64px;background:#404040"></div>
<div style="position:absolute;left:208px;top:750px;width:1px;height:64px;background:#404040"></div>
<div style="position:absolute;left:342px;top:750px;width:1px;height:64px;background:#404040"></div>
<div style="position:absolute;left:462px;top:750px;width:1px;height:64px;background:#404040"></div>
<div style="position:absolute;left:572px;top:750px;width:1px;height:64px;background:#404040"></div>
<div style="position:absolute;left:657px;top:750px;width:1px;height:64px;background:#404040"></div>
<div style="position:absolute;left:759px;top:750px;width:1px;height:64px;background:#404040"></div>
<div style="position:absolute;left:839px;top:750px;width:1px;height:64px;background:#404040"></div>
<div style="position:absolute;left:941px;top:750px;width:1px;height:64px;background:#404040"></div>
<div style="position:absolute;left:1048px;top:750px;width:1px;height:64px;background:#404040"></div>
<div style="position:absolute;left:1162px;top:750px;width:1px;height:64px;background:#404040"></div>
<div style="position:absolute;left:1221px;top:750px;width:1px;height:64px;background:#404040"></div>
<div style="position:absolute;left:1301px;top:750px;width:1px;height:64px;background:#404040"></div>
<div style="position:absolute;left:1424px;top:750px;width:1px;height:64px;background:#404040"></div>
<div style="position:absolute;left:1518px;top:750px;width:1px;height:64px;background:#404040"></div>
<div style="position:absolute;left:1619px;top:750px;width:1px;height:64px;background:#404040"></div>
<div style="position:absolute;left:1695px;top:750px;width:1px;height:64px;background:#404040"></div>
<svg style="left:28.5px;top:778.2px" width="9" height="6" viewBox="0 0 9 6"><path d="M1 1.2 L4.5 4.6 L8 1.2" fill="none" stroke="#2196f3" stroke-width="1.4"/></svg>
<div class="t" style="left:52.5px;top:778.71px;font-size:10.5px;color:#2a2a2a;">6928464</div>
<svg style="left:98px;top:773.5px" width="15" height="15" viewBox="0 0 15 15"><g fill="none" stroke="#7a8793" stroke-width="1.5" stroke-linecap="round"><circle cx="6" cy="5" r="4.3"/><path d="M9.3 8.3 L13.3 12.2" stroke-width="2.1"/></g></svg>
<div class="abs" style="left:126px;width:78px;top:767.20px;text-align:left;font-size:11px;line-height:15px;color:#2a2a2a;letter-spacing:-0.55px;">САХАРНАЯ<br>СВЕКЛА</div>
<div class="abs" style="left:213px;width:125px;top:774.70px;text-align:left;font-size:11px;line-height:15px;color:#2a2a2a;letter-spacing:-0.55px;">САХАРНАЯ СВЕКЛА</div>
<div class="abs" style="left:347px;top:758.00px;font-size:11px;line-height:15px;color:#2a2a2a;white-space:nowrap;">2-Я Междурядная<br>обработка сах/<br>свеклы</div>
<div class="abs" style="left:383px;top:787.50px;width:26px;height:16px;border:1px solid #999;background:#eee;border-radius:2px"><svg style="left:6.5px;top:3px" width="14" height="11" viewBox="0 0 14 11"><g fill="#222"><circle cx="1.6" cy="1.8" r="1.25"/><circle cx="1.6" cy="5.5" r="1.25"/><circle cx="1.6" cy="9.2" r="1.25"/></g><g fill="#444"><rect x="4.5" y="1.3" width="8.5" height="1"/><rect x="4.5" y="5" width="8.5" height="1"/><rect x="4.5" y="8.7" width="8.5" height="1"/></g></svg></div>
<div class="abs" style="left:468px;width:99px;top:774.70px;text-align:left;font-size:11px;line-height:15px;color:#2a2a2a;">-</div>
<div class="abs" style="left:578px;width:74px;top:774.70px;text-align:left;font-size:11px;line-height:15px;color:#2a2a2a;letter-spacing:-0.2px;">23.05.2025</div>
<div class="abs" style="left:663px;width:91px;top:767.20px;text-align:center;font-size:11px;line-height:15px;color:#2a2a2a;letter-spacing:-0.2px;">23.05.2025<br>10:14:32</div>
<div class="abs" style="left:765px;width:69px;top:767.20px;text-align:center;font-size:11px;line-height:15px;color:#2a2a2a;letter-spacing:-0.2px;">23.05.2025<br>17:20:37</div>
<div class="abs" style="left:844px;width:93px;top:767.20px;text-align:left;font-size:11px;line-height:15px;color:#2a2a2a;letter-spacing:-0.25px;">AGROTRON 165.7<br>(<span style="color:#2196f3">1160XA68</span>)</div>
<div class="abs" style="left:946px;width:98px;top:767.20px;text-align:left;font-size:11px;line-height:15px;color:#2a2a2a;letter-spacing:-0.2px;"><b style="letter-spacing:0.15px">КМО-9\541</b> (<svg style="position:relative;display:inline-block;vertical-align:middle;top:-1px;margin-right:3px" width="15" height="10" viewBox="0 0 15 10"><g fill="none" stroke="#222" stroke-width="1.5" stroke-linejoin="miter"><path d="M4.8 0.8 L1 5 L4.8 9.2 M10.2 0.8 L14 5 L10.2 9.2 M1 5 H14"/></g></svg>9<br>м)</div>
<div class="abs" style="left:1053px;width:105px;top:774.70px;text-align:left;font-size:11px;line-height:15px;color:#2a2a2a;">Валиков А. А.</div>
<div class="abs" style="left:1167px;width:50px;top:767.20px;text-align:left;font-size:11px;line-height:15px;color:#2a2a2a;letter-spacing:-0.2px;">ПОЛЕ<br>2.67</div>
<div class="abs" style="left:1226px;width:71px;top:774.70px;text-align:right;font-size:11px;line-height:15px;color:#2a2a2a;"><b>33,68</b></div>
<div class="t" style="left:1340px;width:80px;text-align:right;top:769.59px;font-size:11px;color:#2a2a2a;letter-spacing:-0.2px;">50,47%</div>
<div style="position:absolute;left:1306px;top:781.5px;width:114px;height:15px;background:#dcd0dc;border-radius:2px;overflow:hidden"></div>
<div style="position:absolute;left:1306px;top:781.5px;width:58px;height:15px;background:#4cd964;border-radius:2px 0 0 2px"></div>
<div class="abs" style="left:1429px;width:85px;top:774.70px;text-align:right;font-size:11px;line-height:15px;color:#2a2a2a;">31,66</div>
<div style="position:absolute;left:1526px;top:771.5px;width:28px;height:19px;background:#eee;border:1px solid #888;box-sizing:border-box;border-radius:2px"></div>
<svg style="left:1533px;top:775.0px" width="13" height="13" viewBox="0 0 13 13"><path d="M6.5 0.5 V12.5 M0.5 6.5 H12.5" stroke="#111" stroke-width="1.5"/></svg>
<div class="abs" style="left:1626px;width:63px;top:774.70px;text-align:left;font-size:11px;line-height:15px;color:#2a2a2a;letter-spacing:-0.2px;">Выполнение</div>
<div class="abs" style="left:1701px;width:107px;top:774.70px;text-align:left;font-size:11px;line-height:15px;color:#2a2a2a;">-</div>
<div style="position:absolute;left:44px;top:815px;width:1px;height:4px;background:#404040"></div>
<div style="position:absolute;left:121px;top:815px;width:1px;height:4px;background:#404040"></div>
<div style="position:absolute;left:208px;top:815px;width:1px;height:4px;background:#404040"></div>
<div style="position:absolute;left:342px;top:815px;width:1px;height:4px;background:#404040"></div>
<div style="position:absolute;left:462px;top:815px;width:1px;height:4px;background:#404040"></div>
<div style="position:absolute;left:572px;top:815px;width:1px;height:4px;background:#404040"></div>
<div style="position:absolute;left:657px;top:815px;width:1px;height:4px;background:#404040"></div>
<div style="position:absolute;left:759px;top:815px;width:1px;height:4px;background:#404040"></div>
<div style="position:absolute;left:839px;top:815px;width:1px;height:4px;background:#404040"></div>
<div style="position:absolute;left:941px;top:815px;width:1px;height:4px;background:#404040"></div>
<div style="position:absolute;left:1048px;top:815px;width:1px;height:4px;background:#404040"></div>
<div style="position:absolute;left:1162px;top:815px;width:1px;height:4px;background:#404040"></div>
<div style="position:absolute;left:1221px;top:815px;width:1px;height:4px;background:#404040"></div>
<div style="position:absolute;left:1301px;top:815px;width:1px;height:4px;background:#404040"></div>
<div style="position:absolute;left:1424px;top:815px;width:1px;height:4px;background:#404040"></div>
<div style="position:absolute;left:1518px;top:815px;width:1px;height:4px;background:#404040"></div>
<div style="position:absolute;left:1619px;top:815px;width:1px;height:4px;background:#404040"></div>
<div style="position:absolute;left:1695px;top:815px;width:1px;height:4px;background:#404040"></div>
</body></html>
